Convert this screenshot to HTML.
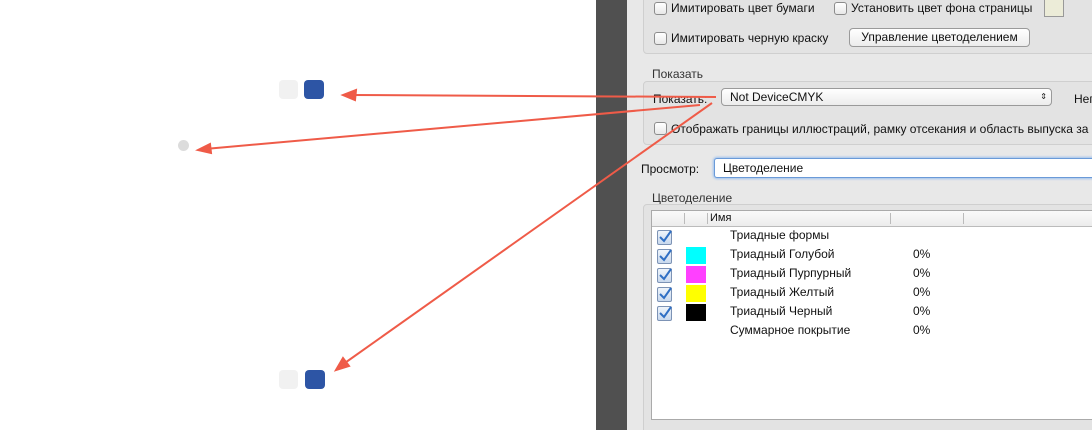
<!DOCTYPE html>
<html style="overflow:hidden;height:430px"><head><meta charset="utf-8"><style>
body{margin:0;width:1092px;height:430px;overflow:hidden;background:#fff;position:relative;font-family:"Liberation Sans","DejaVu Sans",sans-serif;font-size:12px;color:#111}
.a{position:absolute}
.dark{left:596px;top:0;width:31px;height:430px;background:#505050}
.panel{left:627px;top:0;width:465px;height:430px;background:#e8e8e8}
.grp{position:absolute;border:1px solid #cfcfcf;border-radius:4px;background:#e3e3e3}
.cb{position:absolute;width:11px;height:11px;border:1px solid #8c8c8c;border-radius:3px;background:linear-gradient(#fff,#e8e8e8)}
.t{position:absolute;white-space:nowrap}
.btn{position:absolute;border:1px solid #9a9a9a;border-radius:4px;background:linear-gradient(#fff,#ececec);text-align:center}
.sw{position:absolute;left:686px;width:20px;height:17px}
.ck{position:absolute;left:657px;width:13px;height:13px;border:1px solid #7d93b5;border-radius:2px;background:linear-gradient(#eef4fb,#c9d9ee)}
.ck svg{position:absolute;left:0;top:-2px}
</style></head><body>
<div class="a dark"></div>
<div class="a panel"></div>
<div class="grp" style="left:643px;top:-5px;width:460px;height:57px"></div>
<div class="cb" style="left:654px;top:2px"></div><div class="t" style="left:671px;top:1px">Имитировать цвет бумаги</div>
<div class="cb" style="left:834px;top:2px"></div><div class="t" style="left:851px;top:1px">Установить цвет фона страницы</div>
<div class="a" style="left:1044px;top:-1px;width:18px;height:16px;border:1px solid #999;background:#ececd8"></div>
<div class="cb" style="left:654px;top:32px"></div><div class="t" style="left:671px;top:31px">Имитировать черную краску</div>
<div class="btn" style="left:849px;top:28px;width:179px;height:17px;line-height:17px">Управление цветоделением</div>
<div class="t" style="left:652px;top:67px;color:#333">Показать</div>
<div class="grp" style="left:643px;top:81px;width:460px;height:62px"></div>
<div class="t" style="left:653px;top:92px">Показать:</div>
<div class="btn" style="left:721px;top:88px;width:329px;height:16px;text-align:left;line-height:16px;border-radius:4px"><span style="margin-left:8px">Not DeviceCMYK</span><span style="position:absolute;right:4px;top:0;font-size:8px">⇕</span></div>
<div class="t" style="left:1074px;top:92px">Неп</div>
<div class="cb" style="left:654px;top:122px"></div><div class="t" style="left:671px;top:122px">Отображать границы иллюстраций, рамку отсекания и область выпуска за о</div>
<div class="t" style="left:641px;top:162px">Просмотр:</div>
<div class="a" style="left:714px;top:158px;width:380px;height:18px;border:1px solid #6a9ad8;box-shadow:0 0 2px 1px #9cc0ee;border-radius:3px;background:#fff"></div>
<div class="t" style="left:723px;top:161px">Цветоделение</div>
<div class="t" style="left:652px;top:191px;color:#333">Цветоделение</div>
<div class="grp" style="left:643px;top:204px;width:460px;height:230px"></div>
<div class="a" style="left:651px;top:210px;width:445px;height:208px;background:#fff;border:1px solid #aaa"></div>
<div class="a" style="left:652px;top:211px;width:445px;height:15px;background:linear-gradient(#fafafa,#ececec);border-bottom:1px solid #bbb"></div>
<div class="a" style="left:684px;top:213px;width:1px;height:11px;background:#bbb"></div>
<div class="a" style="left:707px;top:213px;width:1px;height:11px;background:#bbb"></div>
<div class="a" style="left:890px;top:213px;width:1px;height:11px;background:#bbb"></div>
<div class="a" style="left:963px;top:213px;width:1px;height:11px;background:#bbb"></div>
<div class="t" style="left:710px;top:212px;font-size:11px">Имя</div>
<div class="ck" style="top:230px"><svg width="14" height="14"><path d="M2 8 L6 12 L13 2" stroke="#2f6fc4" stroke-width="2" fill="none"/></svg></div>
<div class="ck" style="top:249px"><svg width="14" height="14"><path d="M2 8 L6 12 L13 2" stroke="#2f6fc4" stroke-width="2" fill="none"/></svg></div>
<div class="ck" style="top:268px"><svg width="14" height="14"><path d="M2 8 L6 12 L13 2" stroke="#2f6fc4" stroke-width="2" fill="none"/></svg></div>
<div class="ck" style="top:287px"><svg width="14" height="14"><path d="M2 8 L6 12 L13 2" stroke="#2f6fc4" stroke-width="2" fill="none"/></svg></div>
<div class="ck" style="top:306px"><svg width="14" height="14"><path d="M2 8 L6 12 L13 2" stroke="#2f6fc4" stroke-width="2" fill="none"/></svg></div>
<div class="sw" style="top:247px;background:#0ff"></div>
<div class="sw" style="top:266px;background:#ff40ff"></div>
<div class="sw" style="top:285px;background:#ff0"></div>
<div class="sw" style="top:304px;background:#000"></div>
<div class="t" style="left:730px;top:228px">Триадные формы</div>
<div class="t" style="left:730px;top:247px">Триадный Голубой</div><div class="t" style="left:913px;top:247px">0%</div>
<div class="t" style="left:730px;top:266px">Триадный Пурпурный</div><div class="t" style="left:913px;top:266px">0%</div>
<div class="t" style="left:730px;top:285px">Триадный Желтый</div><div class="t" style="left:913px;top:285px">0%</div>
<div class="t" style="left:730px;top:304px">Триадный Черный</div><div class="t" style="left:913px;top:304px">0%</div>
<div class="t" style="left:730px;top:323px">Суммарное покрытие</div><div class="t" style="left:913px;top:323px">0%</div>
<div class="a" style="left:279px;top:80px;width:19px;height:19px;background:#f1f1f1;border-radius:4px"></div>
<div class="a" style="left:304px;top:80px;width:20px;height:19px;background:#2d55a5;border-radius:4px"></div>
<div class="a" style="left:178px;top:140px;width:11px;height:11px;background:#dcdcdc;border-radius:50%"></div>
<div class="a" style="left:279px;top:370px;width:19px;height:19px;background:#f1f1f1;border-radius:4px"></div>
<div class="a" style="left:305px;top:370px;width:20px;height:19px;background:#2d55a5;border-radius:4px"></div>
<svg class="a" style="left:0;top:0" width="1092" height="430">
<g stroke="#ef5b48" stroke-width="2" fill="#ef5b48">
<line x1="716" y1="97" x2="350" y2="95"/><path d="M343 95 L356 90 L355 100Z"/>
<line x1="700" y1="105" x2="205" y2="149"/><path d="M198 150 L210 144 L211 153Z"/>
<line x1="712" y1="103" x2="342" y2="365"/><path d="M336 370 L343 358 L349 366Z"/>
</g></svg>
</body></html>
